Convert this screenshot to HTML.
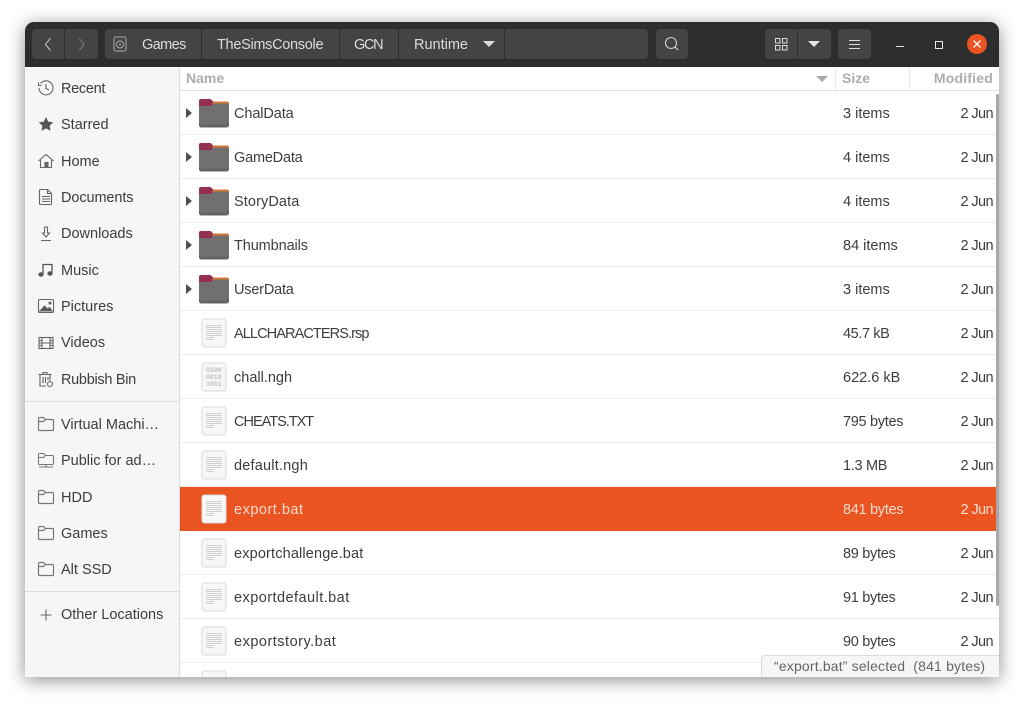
<!DOCTYPE html>
<html><head><meta charset="utf-8"><style>
html,body{margin:0;padding:0;background:#fff;width:1024px;height:705px;overflow:hidden}
body{font-family:"Liberation Sans","DejaVu Sans",sans-serif;font-size:14.5px;color:#3d3d3d;position:relative}
#win{position:absolute;left:25px;top:22px;width:974px;height:655px;border-radius:9px 9px 0 0;box-shadow:0 3px 18px rgba(0,0,0,.45)}
.a{position:absolute;white-space:nowrap}
.hb{position:absolute;top:29px;height:30px;background:#444;border-radius:4px}
.pt{position:absolute;top:36px;margin-top:1px;color:#dcdcdc;line-height:16px;white-space:nowrap}
.vs{position:absolute;top:29px;width:1px;height:30px;background:#2e2e2e}
.si{position:absolute;left:61px;margin-top:1px;line-height:16px;color:#3d3d3d;white-space:nowrap}
.sic{position:absolute;left:37px;width:18px;height:18px}
.row{position:absolute;left:180px;width:819px;height:43px;border-bottom:1px solid #ececec}
.fn{position:absolute;left:234px;margin-top:1px;line-height:16px;white-space:nowrap}
.sz{position:absolute;left:843px;margin-top:1px;line-height:16px;white-space:nowrap}
.dt{position:absolute;right:31px;margin-top:1px;line-height:16px;letter-spacing:-.6px;white-space:nowrap}
.arr{position:absolute;left:186px;width:0;height:0;border-left:6.500px solid #505050;border-top:5px solid transparent;border-bottom:5px solid transparent}
.ic{position:absolute}
</style></head><body>
<svg width="0" height="0" style="position:absolute"><defs>
<symbol id="folder" viewBox="0 0 32 30"><path d="M1 3a2 2 0 0 1 2-2h9.500l2.500 2.500h14a2 2 0 0 1 2 2V12H1z" fill="#d9763a"/><path d="M1 3a2 2 0 0 1 2-2h9.500l2.500 2.500-1 4.500H1z" fill="#93304f"/><path d="M1 8h12.500l2.500-2.500h13.500a1.500 1.500 0 0 1 1.500 1.500v20a2.500 2.500 0 0 1-2.500 2.500h-25A2.500 2.500 0 0 1 1 27z" fill="#707070"/><path d="M1 26.500V27a2.500 2.500 0 0 0 2.500 2.500h25A2.500 2.500 0 0 0 31 27v-.5z" fill="#636363"/></symbol>
<symbol id="doc" viewBox="0 0 26 30"><rect x="1" y="1" width="24" height="28" rx="2.500" fill="#f7f7f7" stroke="#dadada"/><g fill="#d0d0d0"><rect x="5" y="7" width="16" height="1"/><rect x="5" y="9" width="16" height="1"/><rect x="5" y="11" width="16" height="1"/><rect x="5" y="13" width="16" height="1"/><rect x="5" y="15" width="16" height="1"/><rect x="5" y="17" width="16" height="1"/><rect x="5" y="19" width="8" height="1"/><rect x="5" y="21" width="8" height="1"/></g></symbol>
<symbol id="sf" viewBox="0 0 18 18"><path d="M2.500 15.500a1 1 0 0 1-1-1V3.500a1 1 0 0 1 1-1h4l2 2h7a1 1 0 0 1 1 1v9a1 1 0 0 1-1 1zM1.500 6.500h5l2-2" fill="none" stroke="#777" stroke-width="1.200"/></symbol>
</defs></svg>
<div id="win"></div>

<!-- Header -->
<div class="a" style="left:25px;top:22px;width:974px;height:45px;background:#2d2d2d;border-radius:9px 9px 0 0"></div>
<div class="hb" style="left:32px;width:66px"></div><div class="vs" style="left:64px"></div>
<svg class="ic" style="left:42px;top:36px" width="12" height="16"><path d="M8.500 2L3.500 8.500l5 6" fill="none" stroke="#c8c8c8"/></svg>
<svg class="ic" style="left:76px;top:36px" width="12" height="16"><path d="M3 2l5 6.500-5 6" fill="none" stroke="#7c7c7c"/></svg>
<div class="hb" style="left:105px;width:543px"></div>
<div class="vs" style="left:201px"></div><div class="vs" style="left:339px"></div><div class="vs" style="left:398px"></div><div class="vs" style="left:504px"></div>
<svg class="ic" style="left:113px;top:36px" width="14" height="16"><rect x="1" y="1" width="12" height="14" rx="2" fill="none" stroke="#aaa"/><circle cx="7" cy="8.500" r="3.500" fill="none" stroke="#aaa"/><circle cx="7" cy="8.500" r="1" fill="#aaa"/></svg>
<div class="pt" style="left:142px;letter-spacing:-.6px">Games</div>
<div class="pt" style="left:217px;letter-spacing:-.3px">TheSimsConsole</div>
<div class="pt" style="left:354px;letter-spacing:-1.3px">GCN</div>
<div class="pt" style="left:414px">Runtime</div>
<div class="a" style="left:483px;top:41px;width:0;height:0;border-top:6px solid #dcdcdc;border-left:6px solid transparent;border-right:6px solid transparent"></div>
<div class="hb" style="left:656px;width:32px"></div>
<svg class="ic" style="left:664px;top:36px" width="16" height="16"><circle cx="7" cy="7" r="5.500" fill="none" stroke="#d0d0d0" stroke-width="1.100"/><path d="M11 11l3 3" stroke="#d0d0d0" stroke-width="1.200"/></svg>
<div class="hb" style="left:765px;width:66px"></div><div class="vs" style="left:797px"></div>
<svg class="ic" style="left:775px;top:38px" width="13" height="13" fill="none" stroke="#ddd"><rect x=".5" y=".5" width="4.500" height="4.500"/><rect x="7.500" y=".5" width="4.500" height="4.500"/><rect x=".5" y="7.500" width="4.500" height="4.500"/><rect x="7.500" y="7.500" width="4.500" height="4.500"/></svg>
<div class="a" style="left:808px;top:41px;width:0;height:0;border-top:6px solid #e6e6e6;border-left:6px solid transparent;border-right:6px solid transparent"></div>
<div class="hb" style="left:838px;width:33px"></div>
<svg class="ic" style="left:849px;top:38px" width="11" height="12"><path d="M0 2.500h11M0 6.500h11M0 10.500h11" stroke="#ddd"/></svg>
<div class="a" style="left:896px;top:46px;width:8px;height:1px;background:#e0e0e0"></div>
<div class="a" style="left:935px;top:41px;width:6px;height:6px;border:1px solid #e8e8e8"></div>
<div class="a" style="left:967px;top:34px;width:20px;height:20px;border-radius:50%;background:#e95420"></div>
<svg class="ic" style="left:972px;top:39px" width="10" height="10"><path d="M1.500 1.500l7 7M8.500 1.500l-7 7" stroke="#fff" stroke-width="1.300"/></svg>

<!-- Sidebar -->
<div class="a" style="left:25px;top:67px;width:154px;height:610px;background:#f6f6f6;border-right:1px solid #dcdcdc"></div>
<svg class="sic" style="top:79px" viewBox="0 0 18 18" fill="none" stroke="#666" stroke-width="1.100"><path d="M3.500 4.500A7 7 0 1 1 2 9"/><path d="M1.500 3.500v3h3M9 5v4.500l3 1.500"/></svg>
<div class="si" style="top:80px;letter-spacing:-.3px">Recent</div>
<svg class="sic" style="top:115px" viewBox="0 0 18 18"><path d="M9 2l2.200 4.600 5 .7-3.600 3.500.9 5L9 13.400 4.500 15.800l.9-5L1.800 7.300l5-.7z" fill="#555"/></svg>
<div class="si" style="top:116px">Starred</div>
<svg class="sic" style="top:152px" viewBox="0 0 18 18" fill="none" stroke="#666" stroke-width="1.100"><path d="M1.500 9L9 2.500 16.500 9M3.500 8v7.500h11V8"/><rect x="8" y="10.500" width="3" height="5" fill="#666"/></svg>
<div class="si" style="top:152.500px">Home</div>
<svg class="sic" style="top:188px" viewBox="0 0 18 18" fill="none" stroke="#666" stroke-width="1.100"><path d="M3.500 1.500h7l4 4v10a1 1 0 0 1-1 1h-10a1 1 0 0 1-1-1v-13a1 1 0 0 1 1-1zM10.500 1.500v4h4M5 8.500h8M5 11h8M5 13.500h8"/></svg>
<div class="si" style="top:189px;letter-spacing:-.1px">Documents</div>
<svg class="sic" style="top:225px" viewBox="0 0 18 18" fill="none" stroke="#666" stroke-width="1.100"><path d="M7.500 2h3v6h2L9 12 5.500 8h2zM4 15.500h10"/></svg>
<div class="si" style="top:225px">Downloads</div>
<svg class="sic" style="top:261px" viewBox="0 0 18 18" fill="none" stroke="#555" stroke-width="1.300"><path d="M6 13.500V3.500h9v9"/><ellipse cx="4" cy="13.500" rx="2" ry="1.600" fill="#555"/><ellipse cx="13" cy="12.500" rx="2" ry="1.600" fill="#555"/></svg>
<div class="si" style="top:261.500px">Music</div>
<svg class="sic" style="top:297px" viewBox="0 0 18 18" fill="none" stroke="#666" stroke-width="1.100"><rect x="1.500" y="2.500" width="15" height="13" rx="1"/><path d="M3 14l4.500-5 3 3 2-1.500 2.500 3.500z" fill="#555"/><circle cx="13" cy="6" r="1" fill="#555"/></svg>
<div class="si" style="top:298px">Pictures</div>
<svg class="sic" style="top:334px" viewBox="0 0 18 18" fill="none" stroke="#666" stroke-width="1.100"><rect x="2" y="3.500" width="14" height="11"/><path d="M5 3.500v11M13 3.500v11M5 9h8M2 6.500h3M2 9h3M2 11.500h3M13 6.500h3M13 9h3M13 11.500h3"/></svg>
<div class="si" style="top:334px">Videos</div>
<svg class="sic" style="top:370px" viewBox="0 0 18 18" fill="none" stroke="#666" stroke-width="1.100"><path d="M1.500 4.500h13M6 4.500v-2h4v2M3 4.500v11.500h6M13 4.500v6M6 7v6M8.500 7v6M11 7v3"/><circle cx="13" cy="14" r="2.500"/></svg>
<div class="si" style="top:370.500px;letter-spacing:-.3px">Rubbish Bin</div>
<div class="a" style="left:25px;top:401px;width:154px;height:1px;background:#dedede"></div>
<svg class="sic" style="top:415px"><use href="#sf"/></svg><div class="si" style="top:415.500px">Virtual Machi…</div>
<svg class="sic" style="top:451px" viewBox="0 0 18 18"><path d="M2.500 13.500a1 1 0 0 1-1-1V3.500a1 1 0 0 1 1-1h4l2 2h7a1 1 0 0 1 1 1v7a1 1 0 0 1-1 1zM1.500 6.500h5l2-2M2 16h14M9 13.500V16" fill="none" stroke="#777" stroke-width="1.100"/></svg><div class="si" style="top:452px">Public for ad…</div>
<svg class="sic" style="top:488px"><use href="#sf"/></svg><div class="si" style="top:488.500px">HDD</div>
<svg class="sic" style="top:524px"><use href="#sf"/></svg><div class="si" style="top:525px">Games</div>
<svg class="sic" style="top:560px"><use href="#sf"/></svg><div class="si" style="top:561px">Alt SSD</div>
<div class="a" style="left:25px;top:591px;width:154px;height:1px;background:#dedede"></div>
<svg class="sic" style="top:606px" viewBox="0 0 18 18"><path d="M9 3.500v11M3.500 9h11" stroke="#666" stroke-width="1.100"/></svg>
<div class="si" style="top:606px">Other Locations</div>

<!-- List -->
<div class="a" style="left:180px;top:67px;width:819px;height:610px;background:#fff"></div>
<div class="a" style="left:180px;top:90px;width:819px;height:1px;background:#e0e0e0"></div>
<div class="a" style="left:835px;top:67px;width:1px;height:23px;background:#e8e8e8"></div>
<div class="a" style="left:909px;top:67px;width:1px;height:23px;background:#e8e8e8"></div>
<div class="a" style="left:186px;top:70px;font-weight:bold;color:#adadad;line-height:16px;font-size:14px">Name</div>
<div class="a" style="left:842px;top:70px;font-weight:bold;color:#adadad;line-height:16px;font-size:14px">Size</div>
<div class="a" style="right:31px;top:70px;font-weight:bold;color:#adadad;line-height:16px;font-size:14px;letter-spacing:.2px">Modified</div>
<div class="a" style="left:816px;top:76px;width:0;height:0;border-top:6px solid #aaa;border-left:6.500px solid transparent;border-right:6.500px solid transparent"></div>

<div class="row" style="top:91px"></div><div class="row" style="top:135px"></div><div class="row" style="top:179px"></div><div class="row" style="top:223px"></div><div class="row" style="top:267px"></div><div class="row" style="top:311px"></div><div class="row" style="top:355px"></div><div class="row" style="top:399px"></div><div class="row" style="top:443px"></div>
<div class="row" style="top:487px;height:44px;background:#e95420;border:0"></div>
<div class="row" style="top:531px"></div><div class="row" style="top:575px"></div><div class="row" style="top:619px"></div>

<div class="arr" style="top:108px"></div><div class="arr" style="top:152px"></div><div class="arr" style="top:196px"></div><div class="arr" style="top:240px"></div><div class="arr" style="top:284px"></div>
<svg class="ic" style="left:198px;top:98px" width="32" height="30"><use href="#folder"/></svg>
<svg class="ic" style="left:198px;top:142px" width="32" height="30"><use href="#folder"/></svg>
<svg class="ic" style="left:198px;top:186px" width="32" height="30"><use href="#folder"/></svg>
<svg class="ic" style="left:198px;top:230px" width="32" height="30"><use href="#folder"/></svg>
<svg class="ic" style="left:198px;top:274px" width="32" height="30"><use href="#folder"/></svg>
<svg class="ic" style="left:201px;top:318px" width="26" height="30"><use href="#doc"/></svg>
<svg class="ic" style="left:201px;top:362px" width="26" height="30"><rect x="1" y="1" width="24" height="28" rx="2.500" fill="#f7f7f7" stroke="#dadada"/><text x="5" y="10" font-size="6.500" font-family="Liberation Mono" fill="#a8a8a8">0100</text><text x="5" y="17" font-size="6.500" font-family="Liberation Mono" fill="#a8a8a8">0010</text><text x="5" y="24" font-size="6.500" font-family="Liberation Mono" fill="#a8a8a8">1001</text></svg>
<svg class="ic" style="left:201px;top:406px" width="26" height="30"><use href="#doc"/></svg>
<svg class="ic" style="left:201px;top:450px" width="26" height="30"><use href="#doc"/></svg>
<svg class="ic" style="left:201px;top:494px" width="26" height="30"><use href="#doc"/></svg>
<svg class="ic" style="left:201px;top:538px" width="26" height="30"><use href="#doc"/></svg>
<svg class="ic" style="left:201px;top:582px" width="26" height="30"><use href="#doc"/></svg>
<svg class="ic" style="left:201px;top:626px" width="26" height="30"><use href="#doc"/></svg>
<svg class="ic" style="left:201px;top:670px" width="26" height="7"><use href="#doc" width="26" height="30"/></svg>

<div class="fn" style="top:105px;letter-spacing:-.1px">ChalData</div><div class="sz" style="top:105px">3 items</div><div class="dt" style="top:105px">2 Jun</div>
<div class="fn" style="top:149px;letter-spacing:-.2px">GameData</div><div class="sz" style="top:149px">4 items</div><div class="dt" style="top:149px">2 Jun</div>
<div class="fn" style="top:193px;letter-spacing:.1px">StoryData</div><div class="sz" style="top:193px">4 items</div><div class="dt" style="top:193px">2 Jun</div>
<div class="fn" style="top:237px;letter-spacing:-.1px">Thumbnails</div><div class="sz" style="top:237px">84 items</div><div class="dt" style="top:237px">2 Jun</div>
<div class="fn" style="top:281px;letter-spacing:-.2px">UserData</div><div class="sz" style="top:281px">3 items</div><div class="dt" style="top:281px">2 Jun</div>
<div class="fn" style="top:325px;letter-spacing:-.9px">ALLCHARACTERS.rsp</div><div class="sz" style="top:325px;letter-spacing:-.4px">45.7 kB</div><div class="dt" style="top:325px">2 Jun</div>
<div class="fn" style="top:369px">chall.ngh</div><div class="sz" style="top:369px">622.6 kB</div><div class="dt" style="top:369px">2 Jun</div>
<div class="fn" style="top:413px;letter-spacing:-1px">CHEATS.TXT</div><div class="sz" style="top:413px;letter-spacing:-.3px">795 bytes</div><div class="dt" style="top:413px">2 Jun</div>
<div class="fn" style="top:457px;letter-spacing:.2px">default.ngh</div><div class="sz" style="top:457px;letter-spacing:-.3px">1.3 MB</div><div class="dt" style="top:457px">2 Jun</div>
<div class="fn" style="top:501px;color:#fbdccf;letter-spacing:.5px">export.bat</div><div class="sz" style="top:501px;color:#fbdccf;letter-spacing:-.3px">841 bytes</div><div class="dt" style="top:501px;color:#fbdccf">2 Jun</div>
<div class="fn" style="top:545px;letter-spacing:.15px">exportchallenge.bat</div><div class="sz" style="top:545px;letter-spacing:-.3px">89 bytes</div><div class="dt" style="top:545px">2 Jun</div>
<div class="fn" style="top:589px;letter-spacing:.45px">exportdefault.bat</div><div class="sz" style="top:589px;letter-spacing:-.3px">91 bytes</div><div class="dt" style="top:589px">2 Jun</div>
<div class="fn" style="top:633px;letter-spacing:.5px">exportstory.bat</div><div class="sz" style="top:633px;letter-spacing:-.3px">90 bytes</div><div class="dt" style="top:633px">2 Jun</div>

<!-- Scrollbar -->
<div class="a" style="left:995.500px;top:94px;width:3px;height:512px;background:#a8a8a8;border-radius:2px"></div>

<!-- Status -->
<div class="a" style="left:761px;top:655px;width:238px;height:22px;background:#f6f6f6;border:1px solid #dcdcdc;border-width:1px 0 0 1px;border-radius:4px 0 0 0;box-sizing:border-box;color:#666;line-height:20px;padding-left:12px;font-size:14px;letter-spacing:.17px">“export.bat” selected&nbsp; (841 bytes)</div>
</body></html>
